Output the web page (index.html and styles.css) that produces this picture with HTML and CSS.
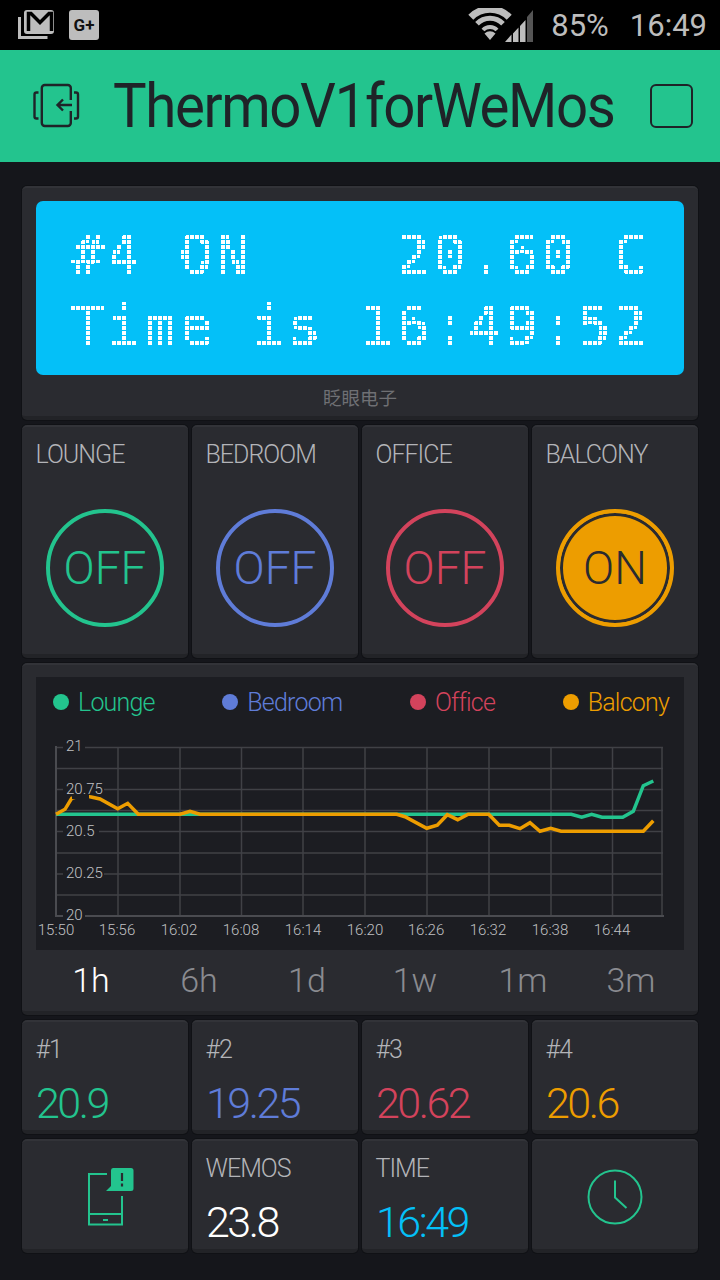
FILE: index.html
```html
<!DOCTYPE html>
<html lang="en">
<head>
    <meta charset="UTF-8">
    <meta name="viewport" content="width=device-width, initial-scale=1.0">
    <title>ThermoV1forWeMos</title>
    <link rel="stylesheet" href="styles.css">
</head>
<body>

<div class="status">
    <div class="status-left">
        <svg class="gmail" width="36" height="30" viewBox="0 0 36 30">
            <path d="M1.5 7v20.5h28" fill="none" stroke="#bdbdbd" stroke-width="3"/>
            <rect x="6" y="0" width="30" height="24" rx="3" fill="#bdbdbd"/>
            <path d="M10.5 21V3.5h2.5l9 9 9-9h2.500V21" fill="none" stroke="#000" stroke-width="3.500"/>
        </svg>
        <span class="gplus">G+</span>
    </div>
    <div class="status-right">
        <svg class="wifi" width="66" height="34" viewBox="0 0 66 34">
            <g fill="none" stroke="#bdbdbd">
                <path d="M3.800 9.200a27 27 0 0 1 38.400 0" stroke-width="7"/>
                <path d="M10 15.800a18 18 0 0 1 26 0" stroke-width="5"/>
                <path d="M16 22a9.500 9.500 0 0 1 14 0" stroke-width="4"/>
            </g>
            <path d="M17.500 25.500a8 8 0 0 1 11 0L23 32z" fill="#bdbdbd"/>
            <path d="M38 34h6.500v-7.500zM46 34h5.500v-14.500l-5.500 6zM53 34h5.500v-22l-5.500 6z" fill="#bdbdbd"/>
            <path d="M60 34h6V2l-6 7z" fill="#555"/>
        </svg>
        <span class="battery">85%</span>
        <span class="clock">16:49</span>
    </div>
</div>

<header class="topbar">
    <svg class="back-icon" width="48" height="46" viewBox="33 83 48 46">
        <g fill="none" stroke="#1f2328" stroke-width="2.400">
            <path d="M70.800 100V88a3 3 0 0 0-3-3H44.800a3 3 0 0 0-3 3v35a3 3 0 0 0 3 3h23a3 3 0 0 0 3-3v-12"/>
            <path d="M38.500 92.500h-2a2 2 0 0 0-2 2v22a2 2 0 0 0 2 2h2"/>
            <path d="M74 92.500h2a2 2 0 0 1 2 2v22a2 2 0 0 1-2 2h-2"/>
            <path d="M72 105H58M63 99.500L57.500 105l5.500 5.500"/>
        </g>
    </svg>
    <h1 class="title">ThermoV1forWeMos</h1>
    <div class="square"></div>
</header>

<main class="board">

    <section class="card lcd-card">
        <div class="lcd">
            <div class="lcd-row">
                <span>#</span><span>4</span><span> </span><span>O</span><span>N</span><span> </span><span> </span><span> </span><span> </span><span>2</span><span>0</span><span>.</span><span>6</span><span>0</span><span> </span><span>C</span>
            </div>
            <div class="lcd-row">
                <span>T</span><span>i</span><span>m</span><span>e</span><span> </span><span>i</span><span>s</span><span> </span><span>1</span><span>6</span><span>:</span><span>4</span><span>9</span><span>:</span><span>5</span><span>2</span>
            </div>
        </div>
        <div class="lcd-name">眨眼电子</div>
    </section>

    <section class="card btn-card">
        <div class="label">LOUNGE</div>
        <div class="round green">OFF</div>
    </section>
    <section class="card btn-card">
        <div class="label">BEDROOM</div>
        <div class="round blue">OFF</div>
    </section>
    <section class="card btn-card">
        <div class="label">OFFICE</div>
        <div class="round red">OFF</div>
    </section>
    <section class="card btn-card">
        <div class="label">BALCONY</div>
        <div class="round yellow on">ON</div>
    </section>

    <section class="card chart-card">
        <div class="chart">
            <div class="legend">
                <span class="legend-item c-green"><i></i>Lounge</span>
                <span class="legend-item c-blue"><i></i>Bedroom</span>
                <span class="legend-item c-red"><i></i>Office</span>
                <span class="legend-item c-yellow"><i></i>Balcony</span>
            </div>
            <svg class="plot" width="648" height="223" viewBox="36 727 648 223">
                <path class="grid" d="M56 747.500H663M56 768.500H663M56 789.500H663M56 810.500H663M56 831.500H663M56 853H663M56 874H663M56 895H663
                    M118 747V916M180 747V916M241.500 747V916M303 747V916M365 747V916M427 747V916M489 747V916M551 747V916M612.500 747V916M662 747V916"/>
                <path class="axis" d="M56 746V916H664"/>

                <polyline class="line line-green" points="56,814.300 571.300,814.300 581.700,817.300 591.700,814.300 602,817.300 622.700,817.300 633.300,811.300 643.300,785.700 653.300,781"/>
                <polyline class="line line-yellow" points="56,814.300 65,809.300 71.700,798.300 83.300,795 90,796.700 100,799 117.700,808.700 127.700,803.300 138.300,814.300 180,814.300 190,811.300 200,814.300 396.700,814.300 405,816.700 426.700,828.300 437.300,825.300 447.300,814.700 457.700,819.700 468.300,814.300 488.700,814.300 499.300,825.300 509.300,825.300 520,828.700 530,822.700 540,831.300 550.700,828.300 561,831.300 643.300,831.300 653.300,820.700"/>

                <g class="mask">
                    <rect x="63" y="738" width="22" height="17"/>
                    <rect x="63" y="781" width="41" height="14"/>
                    <rect x="72" y="790" width="17" height="9"/>
                    <rect x="63" y="823" width="36" height="17"/>
                    <rect x="63" y="865" width="41" height="17"/>
                    <rect x="63" y="907" width="22" height="17"/>
                </g>
                <g class="tick">
                    <text x="66" y="751">21</text>
                    <text x="66" y="794">20.75</text>
                    <text x="66" y="836">20.5</text>
                    <text x="66" y="878">20.25</text>
                    <text x="66" y="920">20</text>
                </g>
                <g class="tick tick-x">
                    <text x="56" y="935">15:50</text>
                    <text x="117" y="935">15:56</text>
                    <text x="179" y="935">16:02</text>
                    <text x="241" y="935">16:08</text>
                    <text x="303" y="935">16:14</text>
                    <text x="365" y="935">16:20</text>
                    <text x="426" y="935">16:26</text>
                    <text x="488" y="935">16:32</text>
                    <text x="550" y="935">16:38</text>
                    <text x="612" y="935">16:44</text>
                </g>
            </svg>
        </div>
        <div class="ranges">
            <span class="range active">1h</span>
            <span class="range">6h</span>
            <span class="range">1d</span>
            <span class="range">1w</span>
            <span class="range">1m</span>
            <span class="range">3m</span>
        </div>
    </section>

    <section class="card val-card">
        <div class="label">#1</div>
        <div class="value c-green">20.9</div>
    </section>
    <section class="card val-card">
        <div class="label">#2</div>
        <div class="value c-blue">19.25</div>
    </section>
    <section class="card val-card">
        <div class="label">#3</div>
        <div class="value c-red">20.62</div>
    </section>
    <section class="card val-card">
        <div class="label">#4</div>
        <div class="value c-yellow">20.6</div>
    </section>

    <section class="card icon-card phone-card">
        <svg width="48" height="60" viewBox="86 1166 48 60">
            <path d="M107 1173H89V1223.500H122V1195M89 1213H122" fill="none" stroke="#23c48e" stroke-width="2"/>
            <path d="M103 1219h5" stroke="#23c48e" stroke-width="2"/>
            <path d="M113 1167h18a2.500 2.500 0 0 1 2.500 2.500v18a2.500 2.500 0 0 1-2.500 2.500h-25l5-5v-15.500a2.500 2.500 0 0 1 2-2.500z" fill="#23c48e"/>
            <path d="M122 1172v8M122 1182.500v3" stroke="#2a2b30" stroke-width="2.200"/>
        </svg>
    </section>
    <section class="card val-card">
        <div class="label">WEMOS</div>
        <div class="value c-white">23.8</div>
    </section>
    <section class="card val-card">
        <div class="label">TIME</div>
        <div class="value c-cyan">16:49</div>
    </section>
    <section class="card icon-card">
        <svg width="58" height="58" viewBox="0 0 58 58">
            <circle cx="29" cy="29" r="26.500" fill="none" stroke="#23c48e" stroke-width="2"/>
            <path d="M29 12.500V29.500L40.500 40" fill="none" stroke="#23c48e" stroke-width="2"/>
        </svg>
    </section>

</main>

<svg class="filters" width="0" height="0">
    <filter id="dots" x="0" y="0" width="100%" height="100%" color-interpolation-filters="sRGB">
        <feFlood x="1" y="1" width="2" height="2" flood-color="#fff"/>
        <feComposite width="5" height="5"/>
        <feTile result="grid"/>
        <feComposite in="SourceGraphic" in2="grid" operator="in"/>
        <feComponentTransfer>
            <feFuncA type="discrete" tableValues="0 1 1 1"/>
        </feComponentTransfer>
        <feMorphology operator="dilate" radius="1"/>
    </filter>
</svg>

</body>
</html>
```

FILE: styles.css
```css
* {
    box-sizing: border-box;
}

html, body {
    margin: 0;
    padding: 0;
}

body {
    width: 720px;
    height: 1280px;
    overflow: hidden;
    background-color: #15161b;
    font-family: Roboto, "Noto Sans", sans-serif;
    font-weight: 300;
}

/* status bar */
.status {
    display: flex;
    justify-content: space-between;
    align-items: center;
    height: 50px;
    padding: 0 13px 0 18px;
    background-color: #000;
    color: #bdbdbd;
}
.status-left {
    display: flex;
    align-items: center;
    gap: 15px;
}
.gplus {
    display: flex;
    align-items: center;
    justify-content: center;
    width: 30px;
    height: 30px;
    border-radius: 3px;
    background-color: #bdbdbd;
    color: #111;
    font-size: 17px;
    font-weight: 700;
}
.status-right {
    display: flex;
    align-items: center;
}
.wifi {
    margin-right: 18px;
}
.battery, .clock {
    font-size: 31px;
    font-weight: 400;
}
.clock {
    margin-left: 21px;
}

/* top bar */
.topbar {
    display: flex;
    align-items: center;
    height: 112px;
    padding: 0 27px 0 33px;
    background-color: #23c48e;
    color: #1f2328;
}
.back-icon {
    margin-right: 32px;
    flex: none;
}
.title {
    flex: none;
    width: 501px;
    margin: 0;
    font-size: 61px;
    font-weight: 400;
    letter-spacing: -1.500px;
    white-space: nowrap;
    transform: scaleX(.925);
    transform-origin: left center;
}
.square {
    width: 43px;
    height: 44px;
    margin-left: auto;
    border: 2px solid #1f2328;
    border-radius: 6px;
    flex: none;
}

/* widgets */
.board {
    display: grid;
    grid-template-columns: repeat(4, 166px);
    grid-template-rows: 234px 233px 352px 114px 114px;
    gap: 5px 4px;
    padding: 24px 22px 0;
}
.card {
    border-radius: 5px;
    background-color: #2a2b30;
    border-top: 2px solid #323338;
    border-bottom: 4px solid #222327;
    box-shadow: 0 0 0 1px #101115;
}
.label {
    padding: 0 13.500px;
    font-size: 25px;
    font-weight: 300;
    letter-spacing: -1px;
    color: #b3b4b8;
}

/* lcd */
.lcd-card {
    grid-column: span 4;
    padding: 13px 14px 0;
}
.lcd {
    display: flex;
    flex-direction: column;
    height: 174px;
    padding: 29px 0 0 35px;
    border-radius: 7px;
    background-color: #04c0f8;
}
.lcd-row {
    display: flex;
    height: 71px;
}
.lcd-row span {
    width: 36.200px;
    height: 50px;
    flex: none;
    font-family: "DejaVu Sans Mono", monospace;
    font-size: 54px;
    font-weight: 400;
    line-height: 50px;
    color: #fff;
    white-space: pre;
    filter: url(#dots);
}
.lcd-name {
    margin-top: 9px;
    text-align: center;
    font-family: "Noto Sans CJK SC", sans-serif;
    font-size: 18.500px;
    font-weight: 400;
    color: #6f7074;
}

/* buttons */
.btn-card {
    display: flex;
    flex-direction: column;
    align-items: center;
    padding-top: 13px;
}
.btn-card .label {
    align-self: flex-start;
    height: 69px;
}
.round {
    display: flex;
    align-items: center;
    justify-content: center;
    width: 118px;
    height: 118px;
    border: 4px solid;
    border-radius: 50%;
    font-size: 46px;
    font-weight: 300;
}
.green { color: #23c48e; }
.blue { color: #5f7cd8; }
.red { color: #d3435c; }
.yellow { color: #ed9d00; }
.round.on {
    border-color: #ed9d00;
    background-color: #ed9d00;
    box-shadow: inset 0 0 0 3px #2a2b30;
    color: #2a2b30;
}

/* chart */
.chart-card {
    grid-column: span 4;
    padding: 12px 14px 0;
}
.chart {
    height: 273px;
    background-color: #1c1d22;
}
.legend {
    display: flex;
    justify-content: space-between;
    align-items: center;
    height: 50px;
    padding: 0 15px 0 17px;
    font-size: 25px;
    font-weight: 300;
    letter-spacing: -.8px;
}
.legend-item {
    display: flex;
    align-items: center;
    gap: 9px;
}
.legend-item i {
    width: 16px;
    height: 16px;
    border-radius: 50%;
    background-color: currentColor;
}
.c-green { color: #23c48e; }
.c-blue { color: #5f7cd8; }
.c-red { color: #d3435c; }
.c-yellow { color: #ed9d00; }
.c-white { color: #fff; }
.c-cyan { color: #04c0f8; }

.plot {
    display: block;
}
.grid {
    fill: none;
    stroke: #404146;
    stroke-width: 1.500;
}
.axis {
    fill: none;
    stroke: #4a4b50;
    stroke-width: 2;
}
.line {
    fill: none;
    stroke-width: 3.500;
    stroke-linejoin: miter;
}
.line-green { stroke: #23c48e; }
.line-yellow { stroke: #ed9d00; }
.mask rect {
    fill: #1c1d22;
}
.tick text {
    font-size: 15px;
    font-weight: 300;
    fill: #c0c1c4;
}
.tick-x text {
    text-anchor: middle;
}

.ranges {
    display: grid;
    grid-template-columns: repeat(6, 108px);
    align-items: center;
    height: 60px;
    padding-left: 1px;
    text-align: center;
}
.range {
    font-size: 34px;
    font-weight: 300;
    color: #8a8b90;
}
.range.active {
    color: #fff;
}

/* values */
.val-card {
    padding-top: 13px;
}
.value {
    margin-top: 15px;
    padding: 0 14px;
    font-size: 43px;
    font-weight: 300;
    letter-spacing: -2.500px;
    line-height: 48px;
}
.icon-card {
    display: flex;
    align-items: center;
    justify-content: center;
    padding-top: 4px;
}
.phone-card {
    padding-left: 10px;
}
```
